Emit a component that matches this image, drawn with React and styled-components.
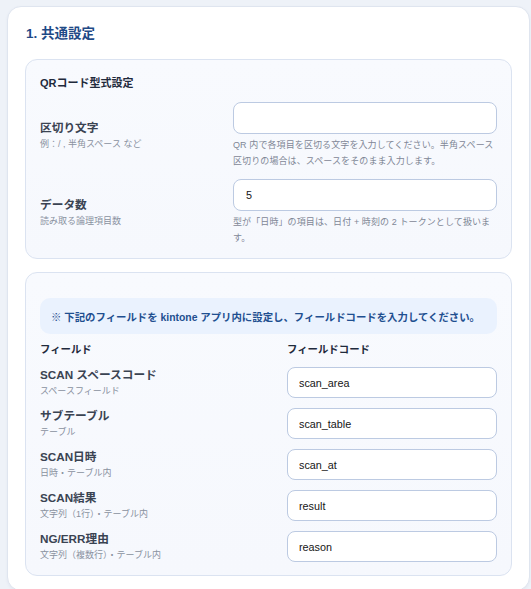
import React from "react";
import styled, { createGlobalStyle } from "styled-components";

const Global = createGlobalStyle`
  html, body { margin: 0; padding: 0; background: #eef2f8; }
  body { font-family: "Liberation Sans", "Noto Sans CJK JP", sans-serif; }
  * { box-sizing: border-box; }
`;

const Page = styled.div`
  padding: 6px 1px 0 7px;
`;

const Panel = styled.section`
  background: #ffffff;
  border: 1px solid #dfe5ef;
  border-radius: 14px;
  padding: 17px 17px 14px 17px;
  box-shadow: 0 1px 3px rgba(30, 60, 110, 0.05);
`;

const PanelTitle = styled.h2`
  margin: 0 0 15px 1px;
  font-size: 13.5px;
  line-height: 20px;
  font-weight: 700;
  color: #1f4a86;
`;

const Card = styled.div`
  background: linear-gradient(180deg, #f8fafe 0%, #f6f8fd 100%);
  border: 1px solid #dbe3f1;
  border-radius: 12px;
  padding: ${(p) => p.$pt || 15}px 14px ${(p) => p.$pb || 12}px 14px;
  & + & { margin-top: 13px; }
`;

const CardTitle = styled.h3`
  margin: 0 0 11px 0;
  font-size: 11px;
  line-height: 16px;
  font-weight: 700;
  color: #1f2a3c;
`;

const FormGrid = styled.div`
  display: flex;
  flex-direction: column;
  gap: 10px;
`;

const FormRow = styled.div`
  display: grid;
  grid-template-columns: ${(p) => p.$cols};
  align-items: center;
`;

const LabelBlock = styled.div`
  display: flex;
  flex-direction: column;
  gap: 1px;
`;

const Label = styled.div`
  font-size: 11.7px;
  line-height: 16px;
  font-weight: 700;
  color: #3a4352;
`;

const SubLabel = styled.div`
  font-size: 9px;
  line-height: 14px;
  color: #89919f;
`;

const Field = styled.div`
  display: flex;
  flex-direction: column;
`;

const Input = styled.input`
  width: 100%;
  height: ${(p) => p.$h || 32}px;
  border: 1px solid #bccae2;
  border-radius: 8px;
  background: #ffffff;
  padding: 0 ${(p) => p.$px || 12}px;
  font-family: "Liberation Sans", "Noto Sans CJK JP", sans-serif;
  font-size: 10.8px;
  color: #151515;
  outline: none;
`;

const Help = styled.p`
  margin: 3px 0 0 0;
  font-size: 9px;
  line-height: 16px;
  color: #7f8796;
  letter-spacing: 0.1px;
`;

const Notice = styled.div`
  height: 36px;
  display: flex;
  align-items: center;
  padding: 0 11px;
  background: #eaf2fe;
  border-radius: 10px;
  font-size: 10.4px;
  font-weight: 700;
  color: #1f4f90;
  margin-bottom: 9px;
`;

const HeadRow = styled.div`
  display: grid;
  grid-template-columns: 247px 1fr;
  margin-bottom: 10px;
`;

const HeadCell = styled.div`
  font-size: 10.4px;
  line-height: 14px;
  font-weight: 700;
  color: #1f2a3c;
`;

const fields = [
  { label: "SCAN スペースコード", sub: "スペースフィールド", code: "scan_area" },
  { label: "サブテーブル", sub: "テーブル", code: "scan_table" },
  { label: "SCAN日時", sub: "日時・テーブル内", code: "scan_at" },
  { label: "SCAN結果", sub: "文字列（1行）・テーブル内", code: "result" },
  { label: "NG/ERR理由", sub: "文字列（複数行）・テーブル内", code: "reason" },
];

export default function App() {
  return (
    <>
      <Global />
      <Page>
        <Panel>
          <PanelTitle>1. 共通設定</PanelTitle>
          <Card>
            <CardTitle>QRコード型式設定</CardTitle>
            <FormGrid>
              <FormRow $cols="193px 1fr">
                <LabelBlock>
                  <Label>区切り文字</Label>
                  <SubLabel>例：/ , 半角スペース など</SubLabel>
                </LabelBlock>
                <Field>
                  <Input defaultValue="" />
                  <Help>
                    QR 内で各項目を区切る文字を入力してください。半角スペース区切りの場合は、スペースをそのまま入力します。
                  </Help>
                </Field>
              </FormRow>
              <FormRow $cols="193px 1fr">
                <LabelBlock>
                  <Label>データ数</Label>
                  <SubLabel>読み取る論理項目数</SubLabel>
                </LabelBlock>
                <Field>
                  <Input defaultValue="5" />
                  <Help>型が「日時」の項目は、日付 + 時刻の 2 トークンとして扱います。</Help>
                </Field>
              </FormRow>
            </FormGrid>
          </Card>
          <Card $pt={25} $pb={13}>
            <Notice>※ 下記のフィールドを kintone アプリ内に設定し、フィールドコードを入力してください。</Notice>
            <HeadRow>
              <HeadCell>フィールド</HeadCell>
              <HeadCell>フィールドコード</HeadCell>
            </HeadRow>
            <FormGrid>
              {fields.map((f) => (
                <FormRow key={f.code} $cols="247px 1fr">
                  <LabelBlock>
                    <Label>{f.label}</Label>
                    <SubLabel>{f.sub}</SubLabel>
                  </LabelBlock>
                  <Input $h={31} $px={11} defaultValue={f.code} />
                </FormRow>
              ))}
            </FormGrid>
          </Card>
        </Panel>
      </Page>
    </>
  );
}
